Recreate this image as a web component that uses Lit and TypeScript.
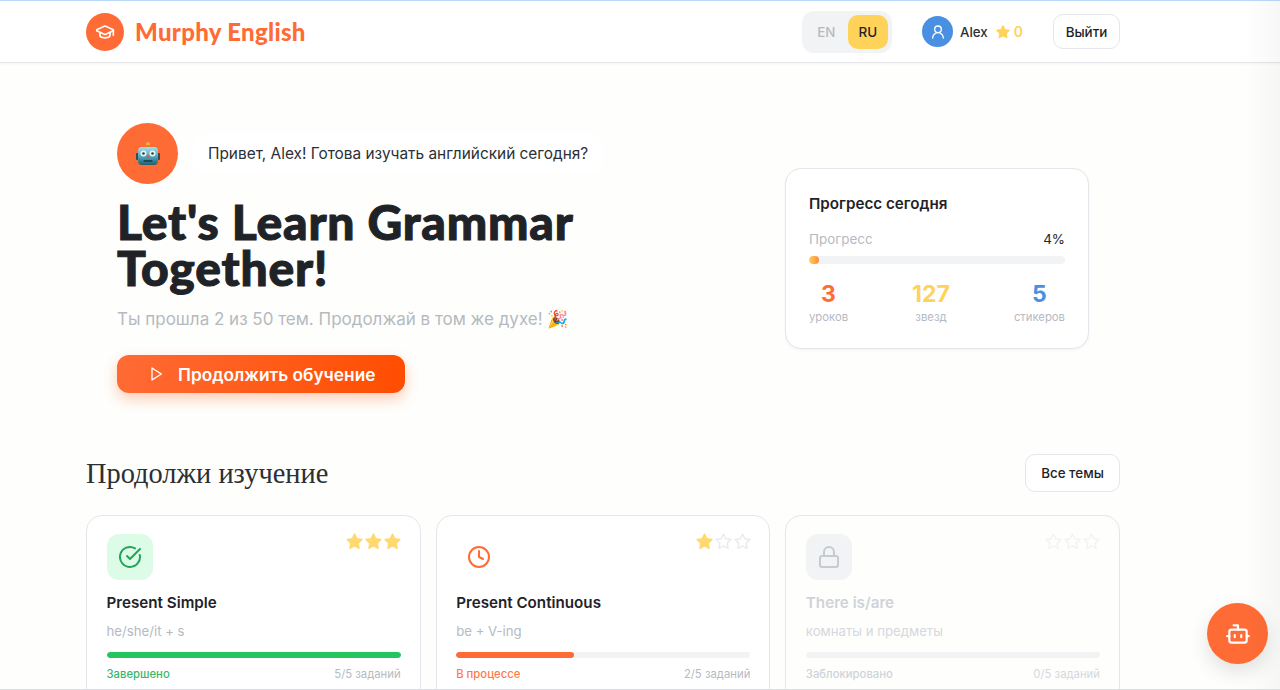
import { LitElement, html, css, svg } from "lit";
import { customElement } from "lit/decorators.js";

const starPath = "M12 2.6l2.9 5.9 6.5.95-4.7 4.6 1.1 6.5L12 17.5l-5.8 3.05 1.1-6.5-4.7-4.6 6.5-.95z";

@customElement("app-root")
export class AppRoot extends LitElement {
  static styles = css`
    :host { display: block; height: 690px; overflow: hidden; position: relative; background: #fefefc; font-family: Inter, "Liberation Sans", sans-serif; color: #1f2328; }
    * { box-sizing: border-box; }
    .topline { height: 1px; background: #b9d9fa; }
    header { height: 62px; background: #fff; border-bottom: 1px solid #e4e6ea; box-shadow: 0 1px 2px rgba(0,0,0,.04); padding: 0 160px 0 86px; display: flex; align-items: center; }
    .logo-c { width: 38px; height: 38px; border-radius: 50%; background: #ff6b35; display: flex; align-items: center; justify-content: center; }
    .logo-t { margin-left: 11px; font: 900 24px Lato, sans-serif; letter-spacing: .3px; color: #ff6b35; }
    .sp { flex: 1; }
    .lang { display: flex; width: 90px; height: 42px; padding: 4px; border-radius: 12px; background: #f1f3f5; margin-right: 30px; }
    .lang span { width: 41px; border-radius: 10px; display: flex; align-items: center; justify-content: center; font-size: 13.4px; font-weight: 500; color: #b5bac2; }
    .lang span.on { background: #ffd25a; color: #1f2328; margin-left: 1px; }
    .ava { width: 31px; height: 31px; border-radius: 50%; background: #4a90e2; display: flex; align-items: center; justify-content: center; }
    .name { margin-left: 7px; font-size: 13.3px; font-weight: 500; color: #2b2f36; }
    .coin { display: flex; align-items: center; margin-left: 7px; font-size: 14px; font-weight: 600; color: #ffd25a; gap: 3px; margin-right: 30px; }
    .btn { background: #fff; border: 1px solid #e4e6ea; border-radius: 10px; display: flex; align-items: center; justify-content: center; font-size: 13.4px; font-weight: 500; color: #1f2328; }
    .out { width: 67px; height: 35px; }
    main { padding: 60px 160px 0 86px; }
    .hero { display: flex; justify-content: space-between; padding: 0 31px; height: 331px; }
    .hl { width: 520px; }
    .say { display: flex; align-items: center; gap: 14px; }
    .bot { width: 61px; height: 61px; border-radius: 50%; background: #ff6b35; display: flex; align-items: center; justify-content: center; }
    .bubble { height: 40px; padding: 0 15px 0 16px; border-radius: 14px; background: #fff; display: flex; align-items: center; font-size: 15.4px; color: #2b2f36; }
    h1 { margin: 15px 0 0; font: 900 48px/46px Lato, sans-serif; letter-spacing: .8px; -webkit-text-stroke: 1px #1f2328; color: #1f2328; }
    .sub { margin-top: 14px; font-size: 17px; line-height: 28px; color: #b5bac2; }
    .cta { margin-top: 22px; width: 288px; height: 38px; border-radius: 12px; background: linear-gradient(100deg, #ff6b35, #ff4d00); box-shadow: 0 6px 14px rgba(255,90,20,.3); display: flex; align-items: center; padding-left: 31px; gap: 14px; color: #fff; font-size: 17.3px; font-weight: 600; }
    .stat { width: 304px; height: 181px; margin-top: 45px; background: #fff; border: 1px solid #e4e6ea; border-radius: 16px; box-shadow: 0 1px 3px rgba(0,0,0,.05); padding: 24px 23px 0; }
    .stat h3 { margin: 0; font-size: 15.2px; line-height: 22px; font-weight: 600; }
    .row { display: flex; justify-content: space-between; margin-top: 14px; font-size: 13.4px; line-height: 20px; color: #b5bac2; }
    .row b { font-weight: 400; color: #1f2328; }
    .bar { height: 8px; border-radius: 4px; background: #f1f3f5; overflow: hidden; }
    .stat .bar { margin-top: 7px; }
    .fill { height: 100%; border-radius: 4px; }
    .nums { display: flex; justify-content: space-between; margin-top: 15px; text-align: center; }
    .n { font-size: 23px; line-height: 30px; font-weight: 700; }
    .l { font-size: 11.3px; line-height: 16px; color: #b5bac2; }
    .sec { display: flex; justify-content: space-between; align-items: center; height: 38px; }
    h2 { margin: 1px 0 0; font: 400 28.4px "Liberation Serif", serif; color: #2b2f36; }
    .all { width: 95px; height: 38px; }
    .cards { display: grid; grid-template-columns: repeat(3, 1fr); gap: 15px; margin-top: 23px; }
    .card { height: 220px; background: #fff; border: 1px solid #e4e6ea; border-radius: 16px; padding: 18px 19px 18px 19.5px; position: relative; }
    .ic { width: 46px; height: 46px; border-radius: 12px; display: flex; align-items: center; justify-content: center; }
    .stars { position: absolute; top: 16px; right: 17.5px; display: flex; }
    .t { margin-top: 11px; font-size: 15.2px; line-height: 24px; font-weight: 600; }
    .d { margin-top: 6px; font-size: 13.2px; line-height: 20px; color: #b5bac2; }
    .card .bar { height: 6px; margin-top: 11px; border-radius: 3px; }
    .foot { display: flex; justify-content: space-between; margin-top: 8px; font-size: 11.3px; line-height: 16px; color: #b5bac2; }
    .foot b { font-weight: 500; }
    .locked { background: #fefefc; }
    .locked .t, .locked .foot b { color: #cfd3d9; }
    .locked .d, .locked .foot span { color: #d5d8dd; }
    .fab { position: absolute; left: 1207px; top: 603px; width: 61px; height: 61px; border-radius: 50%; background: #ff6b35; box-shadow: 0 8px 20px rgba(0,0,0,.12); display: flex; align-items: center; justify-content: center; }
    .edge { position: absolute; top: 0; right: 0; width: 36px; height: 100%; background: linear-gradient(90deg, rgba(0,0,0,0), rgba(0,0,0,.03)); pointer-events: none; }
    .bottom { position: absolute; left: 0; right: 0; bottom: 0; height: 1px; background: #dcdde0; }
  `;

  star(on: boolean, faded = false) {
    return html`<svg width="19" height="19" viewBox="0 0 24 24" fill=${on ? "#ffd970" : "none"} stroke=${on ? "#ffd970" : faded ? "#f1f3f5" : "#e9ebef"} stroke-width="1.8" stroke-linejoin="round"><path d=${starPath}></path></svg>`;
  }

  card(t: string, d: string, status: string, count: string, stars: number, color: string, statusColor: string, pct: number, bg: string, icon: unknown, locked = false) {
    return html`<div class="card ${locked ? "locked" : ""}">
      <div class="ic" style="background:${bg}">${icon}</div>
      <div class="stars">${[0, 1, 2].map((i) => this.star(i < stars, locked))}</div>
      <div class="t">${t}</div>
      <div class="d">${d}</div>
      <div class="bar"><div class="fill" style="width:${pct}%;background:${color}"></div></div>
      <div class="foot"><b style="color:${statusColor}">${status}</b><span>${count}</span></div>
    </div>`;
  }

  render() {
    const ico = (c: string, inner: unknown) => html`<svg width="24" height="24" viewBox="0 0 24 24" fill="none" stroke=${c} stroke-width="2" stroke-linecap="round" stroke-linejoin="round">${inner}</svg>`;
    return html`
      <div class="topline"></div>
      <header>
        <div class="logo-c"><svg width="20" height="20" viewBox="0 0 24 24" fill="none" stroke="#fff" stroke-width="2" stroke-linejoin="round" stroke-linecap="round"><path d="M21.42 10.922a1 1 0 0 0-.019-1.838L12.83 5.18a2 2 0 0 0-1.66 0L2.6 9.08a1 1 0 0 0 0 1.832l8.57 3.908a2 2 0 0 0 1.66 0z"></path><path d="M22 10v6"></path><path d="M6 12.500V16a6 3 0 0 0 12 0v-3.500"></path></svg></div>
        <div class="logo-t">Murphy English</div>
        <div class="sp"></div>
        <div class="lang"><span>EN</span><span class="on">RU</span></div>
        <div class="ava"><svg width="16" height="16" viewBox="0 0 24 24" fill="none" stroke="#fff" stroke-width="2" stroke-linecap="round"><circle cx="12" cy="8" r="5"></circle><path d="M20 21a8 8 0 0 0-16 0"></path></svg></div>
        <div class="name">Alex</div>
        <div class="coin"><svg width="16" height="16" viewBox="0 0 24 24" fill="#ffd25a" stroke="#ffd25a" stroke-width="1.8" stroke-linejoin="round"><path d=${starPath}></path></svg>0</div>
        <div class="btn out">Выйти</div>
      </header>
      <main>
        <section class="hero">
          <div class="hl">
            <div class="say">
              <div class="bot">
                <svg width="24" height="26" viewBox="0 0 24 26" aria-hidden="true">
                  <defs><linearGradient id="rh" x1="0" y1="0" x2="0" y2="1"><stop offset="0" stop-color="#a9dfe8"></stop><stop offset=".55" stop-color="#4da3b8"></stop><stop offset="1" stop-color="#1f5f70"></stop></linearGradient></defs>
                  <circle cx="12" cy="3" r="2" fill="#f2b13c"></circle>
                  <rect x="10.800" y="4" width="2.400" height="3" fill="#c98a2c"></rect>
                  <rect x="0" y="12" width="3" height="7" rx="1" fill="#3b4a52"></rect>
                  <rect x="21" y="12" width="3" height="7" rx="1" fill="#3b4a52"></rect>
                  <rect x="2" y="6" width="20" height="18" rx="4" fill="url(#rh)"></rect>
                  <circle cx="7.500" cy="12.500" r="3" fill="#e6f7fa"></circle>
                  <circle cx="16.500" cy="12.500" r="3" fill="#e6f7fa"></circle>
                  <circle cx="7.500" cy="12.500" r="1.300" fill="#2b3a44"></circle>
                  <circle cx="16.500" cy="12.500" r="1.300" fill="#2b3a44"></circle>
                  <path d="M12 13l1.800 3.500h-3.600z" fill="#e0574f"></path>
                  <rect x="7.500" y="19" width="9" height="2" rx="1" fill="#234652"></rect>
                </svg>
              </div>
              <div class="bubble">Привет, Alex! Готова изучать английский сегодня?</div>
            </div>
            <h1>Let's Learn Grammar<br />Together!</h1>
            <div class="sub">Ты прошла 2 из 50 тем. Продолжай в том же духе! 🎉</div>
            <div class="cta"><svg width="16" height="16" viewBox="0 0 24 24" fill="none" stroke="#fff" stroke-width="2" stroke-linejoin="round"><path d="M6 3l14 9-14 9z"></path></svg>Продолжить обучение</div>
          </div>
          <aside class="stat">
            <h3>Прогресс сегодня</h3>
            <div class="row"><span>Прогресс</span><b>4%</b></div>
            <div class="bar"><div class="fill" style="width:4%;background:linear-gradient(90deg,#ffd25a,#ff8a3c)"></div></div>
            <div class="nums">
              <div><div class="n" style="color:#ff6b35">3</div><div class="l">уроков</div></div>
              <div><div class="n" style="color:#ffd25a">127</div><div class="l">звезд</div></div>
              <div><div class="n" style="color:#4a90e2">5</div><div class="l">стикеров</div></div>
            </div>
          </aside>
        </section>
        <div class="sec"><h2>Продолжи изучение</h2><div class="btn all">Все темы</div></div>
        <div class="cards">
          ${this.card("Present Simple", "he/she/it + s", "Завершено", "5/5 заданий", 3, "#22c55e", "#3cb56b", 100, "#dcfce7", ico("#22a559", svg`<path d="M21.800 10A10 10 0 1 1 17 3.300"></path><path d="m9 11 3 3L22 4"></path>`))}
          ${this.card("Present Continuous", "be + V-ing", "В процессе", "2/5 заданий", 1, "#ff6b35", "#ff7a4a", 40, "transparent", ico("#ff6b35", svg`<circle cx="12" cy="12" r="10"></circle><path d="M12 6v6l4 2"></path>`))}
          ${this.card("There is/are", "комнаты и предметы", "Заблокировано", "0/5 заданий", 0, "#f1f3f5", "#cfd3d9", 0, "#f1f3f5", ico("#c6cad1", svg`<rect x="3" y="11" width="18" height="11" rx="2"></rect><path d="M7 11V7a5 5 0 0 1 10 0v4"></path>`), true)}
        </div>
      </main>
      <div class="fab"><svg width="26" height="26" viewBox="0 0 24 24" fill="none" stroke="#fff" stroke-width="2" stroke-linecap="round" stroke-linejoin="round"><path d="M12 8V4H8"></path><rect x="4" y="8" width="16" height="12" rx="2"></rect><path d="M2 14h2M20 14h2M15 13v2M9 13v2"></path></svg></div>
      <div class="edge"></div>
      <div class="bottom"></div>
    `;
  }
}
